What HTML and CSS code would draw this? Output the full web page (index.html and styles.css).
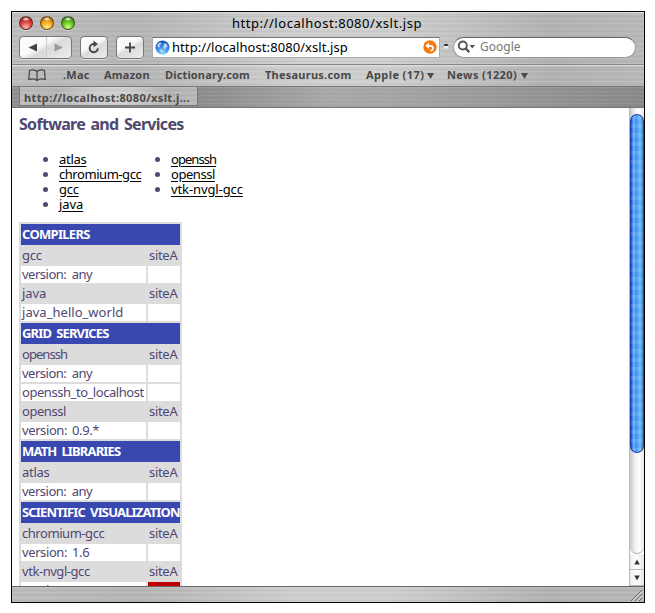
FILE: index.html
```
<!DOCTYPE html>
<html lang="en">
<head>
<meta charset="utf-8">
<title>http://localhost:8080/xslt.jsp</title>
<link rel="stylesheet" href="styles.css">
</head>
<body>
<div class="window">
  <header class="chrome metal">
    <div class="titlebar">
      <div class="lights"><i class="light red"></i><i class="light amber"></i><i class="light green"></i></div>
      <div class="title">http://localhost:8080/xslt.jsp</div>
    </div>
    <div class="toolbar">
      <div class="button nav">
        <svg width="52" height="21" viewBox="0 0 52 21"><path d="M26.500 0v21" stroke="#ccc"/><path d="M8.500 10.500l8.500-4v8z" fill="#444"/><path d="M43 10.500l-8.500-4v8z" fill="#999"/></svg>
      </div>
      <div class="button reload">
        <svg width="26" height="21" viewBox="0 0 26 21"><path d="M14 7h-1.500a4.100 4.100 0 1 0 4.400 4.400" fill="none" stroke="#444" stroke-width="2"/><path d="M12.500 3.500l4.500 3.400-4.500 3.400z" fill="#444"/></svg>
      </div>
      <div class="button add">
        <svg width="26" height="21" viewBox="0 0 26 21"><path d="M13 5.500v10M8 10.500h10" stroke="#444" stroke-width="1.800"/></svg>
      </div>
      <div class="address">
        <svg width="15" height="15" viewBox="0 0 15 15"><defs><radialGradient id="g" cx=".5" cy=".85" r=".85"><stop offset="0" stop-color="#8fd8ff"/><stop offset=".6" stop-color="#2f7fe0"/><stop offset="1" stop-color="#174fa8"/></radialGradient></defs><circle cx="7.500" cy="7.500" r="7" fill="url(#g)"/><path d="M2.500 4l2.500-1.500 1.500.5-.8 1.500-1.200 1 .5 1.500-1.500.5L2.500 6.500zM8.500 5l1.500-2 2 1.500.6 2.500-1.600.5-1 2-1.300-2zM5.500 9l2 1-.5 2.500-1.500-1z" fill="#e4f3ff" opacity=".75"/></svg>
        <span class="url">http://localhost:8080/xslt.jsp</span>
        <svg class="snap" width="14" height="14" viewBox="0 0 14 14"><circle cx="7" cy="7" r="6.700" fill="#f57a0c"/><path d="M4 5.800h3.500a2.400 2.400 0 0 1 0 4.800" fill="none" stroke="#fff" stroke-width="1.700"/><path d="M2.300 5.800L6 2.500v6.600z" fill="#fff"/></svg>
      </div>
      <svg class="grip" width="6" height="8" viewBox="0 0 6 8"><circle cx="3" cy="4.500" r="2.300" fill="#eee"/><path d="M.7 4a2.300 2.300 0 0 1 4.600 0z" fill="#333"/></svg>
      <div class="search">
        <svg width="19" height="14" viewBox="0 0 19 14"><circle cx="5.800" cy="5.500" r="4" fill="none" stroke="#555" stroke-width="1.900"/><path d="M8.600 8.300l3.700 3.900" stroke="#555" stroke-width="2.400"/><path d="M12.500 5h5.500l-2.700 3.500z" fill="#555"/></svg>
        <span class="hint">Google</span>
      </div>
    </div>
  </header>
  <nav class="bookmarks metal">
    <svg class="book" width="18" height="13" viewBox="0 0 18 13"><path d="M9 2.500C7 .6 4 .5 1.500 1.500L.8 10.500C4 9.500 7 9.500 9 11.500c2-2 5-2 8.200-1L16.500 1.500C14 .5 11 .6 9 2.500zV11.500" fill="none" stroke="#444" stroke-width="1.200"/></svg>
    <span class="mark mac">.Mac</span><span class="mark amazon">Amazon</span><span class="mark dictionary">Dictionary.com</span><span class="mark thesaurus">Thesaurus.com</span><span class="mark apple">Apple (17)</span><i class="caret"></i><span class="mark news">News (1220)</span><i class="caret"></i>
  </nav>
  <div class="tabs"><div class="tab metal"><span>http://localhost:8080/xslt.j...</span></div></div>
  <div class="viewport">
    <main class="page">
      <h1>Software and Services</h1>
      <div class="lists">
        <ul><li><a>atlas</a></li><li><a class="tight">chromium-gcc</a></li><li><a>gcc</a></li><li><a class="loose">java</a></li></ul>
        <ul><li><a class="tighter">openssh</a></li><li><a class="tight">openssl</a></li><li><a class="loose">vtk-nvgl-gcc</a></li></ul>
      </div>
      <div class="grid">
        <div class="head compilers">COMPILERS</div>
        <div class="pkg">gcc</div><div class="pkg">siteA</div>
        <div class="test">version: any</div><div class="test"></div>
        <div class="pkg loose">java</div><div class="pkg">siteA</div>
        <div class="test wide">java_hello_world</div><div class="test"></div>
        <div class="head">GRID SERVICES</div>
        <div class="pkg tighter">openssh</div><div class="pkg">siteA</div>
        <div class="test">version: any</div><div class="test"></div>
        <div class="test tight">openssh_to_localhost</div><div class="test"></div>
        <div class="pkg tight">openssl</div><div class="pkg">siteA</div>
        <div class="test number">version: 0.9.*</div><div class="test"></div>
        <div class="head">MATH LIBRARIES</div>
        <div class="pkg">atlas</div><div class="pkg">siteA</div>
        <div class="test">version: any</div><div class="test"></div>
        <div class="head">SCIENTIFIC VISUALIZATION</div>
        <div class="pkg tight">chromium-gcc</div><div class="pkg">siteA</div>
        <div class="test number">version: 1.6</div><div class="test"></div>
        <div class="pkg tight">vtk-nvgl-gcc</div><div class="pkg">siteA</div>
        <div class="test number">version: 1.4.2</div><div class="test fail"></div>
      </div>
    </main>
    <aside class="scrollbar">
      <div class="track"><div class="thumb"></div></div>
      <div class="arrow"><svg width="8" height="8" viewBox="0 0 8 8"><path d="M4 1.500l2.800 5H1.200z" fill="#333"/></svg></div>
      <div class="arrow"><svg width="8" height="8" viewBox="0 0 8 8"><path d="M4 6.500l2.800-5H1.200z" fill="#333"/></svg></div>
    </aside>
  </div>
  <footer class="status metal"><svg width="12" height="13" viewBox="0 0 12 13"><path d="M0 12L11 1M4 12l7-7M8 12l3-3" stroke="#666"/><path d="M1.500 12L11 2.500M5.500 12L11 6.500" stroke="#ddd"/></svg></footer>
</div>
</body>
</html>
```
FILE: styles.css
```
* { box-sizing: border-box; }
body { margin: 0; background: #fff; width: 655px; height: 613px; overflow: hidden; font-family: "Noto Sans", "Open Sans", sans-serif; }
svg { display: block; flex: none; }
.window { margin: 11px 0 0 11px; width: 634px; height: 592px; border: 1px solid #000; display: flex; flex-direction: column; }
.metal { background: repeating-linear-gradient(180deg, rgba(255,255,255,.1) 0 1px, transparent 1px 3px, rgba(0,0,0,.035) 3px 4px, transparent 4px 5px), linear-gradient(90deg, #bcbcbc, #b5b5b5 20%, #cecece 45%, #cecece 60%, #b2b2b2 85%, #b8b8b8); }
.chrome { height: 53px; border-bottom: 1px solid #858585; border-top: 1px solid #ddd; }
.titlebar { height: 22px; display: flex; align-items: center; }
.lights { display: flex; gap: 7px; padding: 0 0 2px 7px; width: 100px; }
.light { width: 14px; height: 14px; border-radius: 50%; border: 1px solid rgba(40,30,20,.65); box-shadow: 0 1px 0 #ddd; }
.red { background: radial-gradient(ellipse 4px 2px at 50% 17%, #fff, transparent), radial-gradient(circle at 50% 85%, #ffb5ad, #df4040 48%, #7a1414); }
.amber { background: radial-gradient(ellipse 4px 2px at 50% 17%, #fff, transparent), radial-gradient(circle at 50% 85%, #fff391, #f5a511 48%, #8d4308); }
.green { background: radial-gradient(ellipse 4px 2px at 50% 17%, #fff, transparent), radial-gradient(circle at 50% 85%, #cdff83, #62c51b 48%, #236007); }
.title { width: 430px; text-align: center; font-size: 13px; line-height: 20px; padding-bottom: 2px; color: #000; letter-spacing: .54px; }
.toolbar { display: flex; align-items: center; padding: 0 8px 0 7px; height: 24px; }
.button { height: 23px; border: 1px solid #777; border-radius: 4px; background: linear-gradient(150deg, #fafafa 0 40%, #dadada 55%, #eee); box-shadow: 0 1px 0 #ddd; }
.nav { width: 53px; }
.reload { width: 28px; margin-left: 8px; }
.add { width: 28px; margin-left: 8px; }
.address { width: 288px; height: 21px; margin-left: 8px; background: #fff; border: 1px solid #aaa; border-top-color: #777; display: flex; align-items: center; padding: 0 2px 0 2px; }
.url { margin-left: 2px; font-size: 13px; line-height: 19px; white-space: nowrap; letter-spacing: .07px; }
.snap { margin-left: auto; }
.grip { margin: -2px 4px 0 3px; }
.search { flex: 1; height: 21px; border-radius: 11px; background: #fff; border: 1px solid #999; border-top-color: #666; display: flex; align-items: center; padding-left: 3px; }
.hint { margin-left: 4px; font-size: 12px; line-height: 17px; padding-bottom: 2px; color: #777; }
.bookmarks { height: 22px; border-bottom: 1px solid #777; border-top: 1px solid #ddd; display: flex; align-items: center; }
.book { margin-left: 16px; margin-right: 17px; }
.mark { font-size: 11px; line-height: 18px; padding-bottom: 2px; font-weight: 700; color: #484848; white-space: nowrap; letter-spacing: .24px; }
.mac { width: 41px; } .amazon { width: 61px; } .dictionary { width: 100px; letter-spacing: .15px; } .thesaurus { width: 101px; } .apple { width: 61px; letter-spacing: .4px; } .news { width: 74px; letter-spacing: .4px; }
.caret { width: 7px; height: 6px; background: #4a4a4a; clip-path: polygon(0 0, 100% 0, 50% 100%); margin-right: 13px; }
.tabs { height: 21px; border-bottom: 1px solid #777; background: repeating-linear-gradient(180deg, rgba(255,255,255,.08) 0 1px, transparent 1px 3px, rgba(0,0,0,.035) 3px 4px), linear-gradient(90deg, #909090, #8d8d8d 30%, #a8a8a8 50%, #a5a5a5 60%, #898989); }
.tab { margin-left: 7px; width: 179px; height: 19px; border: 1px solid #777; border-top: 0; padding-left: 4px; font-size: 11px; line-height: 21px; font-weight: 700; color: #484848; white-space: nowrap; letter-spacing: .38px; }
.viewport { height: 479px; display: flex; background: #fff; overflow: hidden; }
.page { flex: 1; padding-left: 7px; font-size: 13px; color: #4f4870; }
h1 { margin: 5px 0 17px; font-size: 16px; line-height: 22px; font-weight: 700; letter-spacing: -.7px; word-spacing: 2px; white-space: nowrap; }
.lists { display: flex; height: 70px; }
ul { margin: 0; padding: 0 0 0 40px; width: 112px; }
.lists ul + ul { width: 150px; }
li { line-height: 15px; height: 15px; white-space: nowrap; }
a { color: #000; text-decoration: underline; text-underline-offset: 2px; letter-spacing: -.3px; }
.grid { width: 163px; display: grid; grid-template-columns: 125px 32px; gap: 2px; padding: 2px; background: #dcdcdc; letter-spacing: -.3px; }
.head { grid-column: 1 / -1; height: 21px; line-height: 21px; background: #3948b0; color: #fff; font-weight: 700; padding-left: 1px; white-space: nowrap; letter-spacing: -.85px; word-spacing: 2.500px; }
.compilers { letter-spacing: -.7px; }
.pkg, .test { height: 17px; line-height: 17px; padding-left: 1px; white-space: nowrap; }
.test { background: #fff; letter-spacing: -.5px; word-spacing: 2.500px; }
.number { letter-spacing: -.4px; word-spacing: 2px; }
.loose { letter-spacing: -.1px; }
.wide { letter-spacing: .03px; }
.tight { letter-spacing: -.45px; }
.tighter { letter-spacing: -.95px; }
.test.fail { background: #c00000; }
.scrollbar { width: 15px; display: flex; flex-direction: column; border-left: 1px solid #bbb; }
.track { height: 447px; padding-top: 6px; background: linear-gradient(90deg, #c9c9c9, #f0f0f0 35%, #fff 65%, #e6e6e6); border-bottom: 1px solid #aaa; border-radius: 0 0 7px 7px; }
.thumb { height: 339px; border-radius: 7px; border: 1px solid #173fae; border-right-color: #444; background: repeating-linear-gradient(180deg, rgba(255,255,255,.12) 0 3px, transparent 5px 9px), linear-gradient(90deg, #1540d0, #66b4fa 22%, #3c8df2 42%, #66c0ff 75%, #3c77c0); }
.arrow { height: 16px; border-bottom: 1px solid #bbb; background: linear-gradient(90deg, #eee, #fff 50%, #e4e4e4); display: flex; align-items: center; justify-content: center; }
.status { height: 16px; border-top: 1px solid #666; display: flex; justify-content: flex-end; padding: 2px 1px 0 0; }
```
